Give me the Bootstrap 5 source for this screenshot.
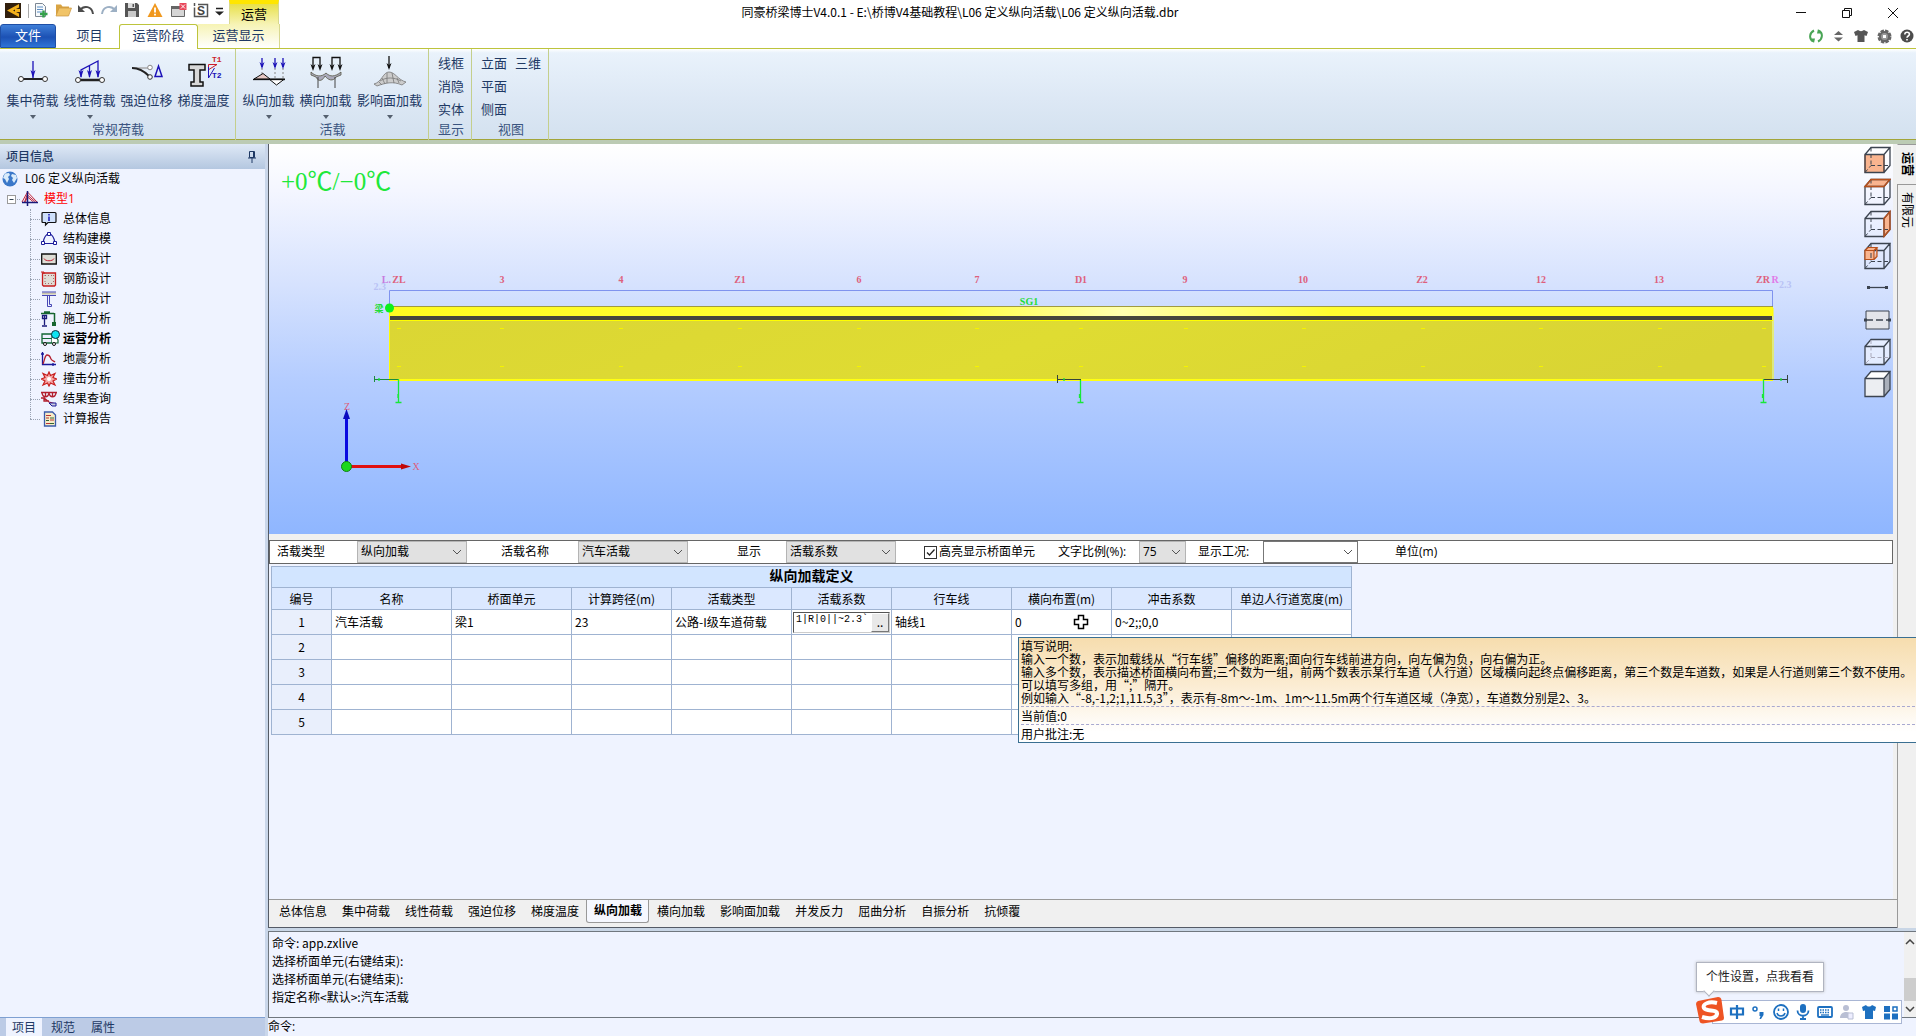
<!DOCTYPE html>
<html lang="zh-CN">
<head>
<meta charset="utf-8">
<meta name="viewport" content="width=device-width, initial-scale=1">
<title>同豪桥梁博士V4.0.1</title>
<link href="https://cdn.jsdelivr.net/npm/bootstrap@5.3.0/dist/css/bootstrap.min.css" rel="stylesheet">
<style>
:root{--ink:#1e3964;--pane:#eff3ff;--rule:#9fb3d1}
body{font:12px/18px "Noto Sans CJK SC",sans-serif;color:#000;background:#fff;overflow:hidden}
button,select,input{font:inherit;color:inherit;border-radius:0}
button{border:0;background:none;padding:0}
svg{display:block;flex:none}
.latin{font-family:"Open Sans","Noto Sans CJK SC",sans-serif}
.cjk{font-family:"Noto Sans CJK SC",sans-serif}
/* title bar and tabs */
.titlebar{height:24px}
.titlebar .cap{line-height:24px}
.quick{padding-left:5px;width:229px}
.ctx-title{width:50px;font-size:13px;border:1px solid #d8d890;border-width:0 1px;border-top:4px solid #ffe600;background:linear-gradient(#e8e04a,#f6f3b4);line-height:20px}
.winbtns{width:275px}
.winbtns button{width:46px;height:24px;display:flex;align-items:center;justify-content:center}
.tabrow{height:25px;border-bottom:1px solid #bdc43c;font-size:13px;color:var(--ink)}
.tabrow a{color:var(--ink);text-decoration:none;line-height:23px;text-align:center;height:24px}
.tabrow .t-file{width:56px;color:#fff;background:linear-gradient(#3f7fd8,#1c51b4 55%,#2f74d6);border:1px solid #1f4fa5;border-radius:3px 3px 0 0;line-height:21px}
.tabrow .t-proj{width:63px;padding-left:4px}
.tabrow .t-on{width:79px;height:25px;background:#fff;border:1px solid #bdc43c;border-bottom:0;border-radius:3px 3px 0 0;line-height:21px}
.tabrow .t-ctx{width:82px;background:linear-gradient(#f6f3b4,#fff);border-right:1px solid #d8d890}
.aux{gap:8px;padding-right:2px}
/* ribbon */
.ribbon{height:95px;background:linear-gradient(#fff 0,#e9f2fb 4px,#dde8f5 50px,#d3e1ef);border-bottom:4px solid #bccbb4;box-shadow:inset 0 -1px #a2a53a;color:var(--ink);font-size:13px}
.rgroup{border-right:1px solid #c4cf8c;height:91px;padding-top:3px}
.rgroup.wide{padding-left:4px;padding-right:3px}
.rgroup.slim{padding-left:9px;padding-right:7px}
.rbody{height:69px}
.rbig{width:57px;display:flex;flex-direction:column;align-items:center;padding-top:4px;white-space:nowrap}
.rbig.w5{width:71px}
.rbig svg{margin-bottom:3px}
.rbig .caret{width:0;height:0;border:3px solid transparent;border-top:4px solid #55606f;border-bottom:0;margin-top:6px}
.rsmall button{display:block;line-height:23px}
.rname{text-align:center;line-height:17px;color:#3a5480}
/* project tree */
.side{width:268px;background:#c9d6ea}
.side-in{width:265px;background:var(--pane)}
.side-head{height:25px;padding:0 8px 0 6px;background:linear-gradient(#dfe9f6,#b4c7e0);color:var(--ink);font-weight:500}
.tree a{color:#000;text-decoration:none;height:20px;display:flex;align-items:center}
.tree .root{padding-left:2px;gap:7px}
.tree .mdl{padding-left:7px;color:red}
.tree .leaf{height:20px;margin-left:30px;display:flex;align-items:center;position:relative}
.tree .leaf::before{content:"";width:10px;border-top:1px dotted #9aa3b4;margin-right:1px}
.tree .leaf::after{content:"";position:absolute;left:0;top:0;height:20px;border-left:1px dotted #9aa3b4}
.tree .leaf:last-child::after{height:10px}
.tree .leaf a{gap:6px}
.tree .leaf a.fw-bold{gap:3px}
.side-tabs{height:19px;background:#bccbe6;border-top:1px solid #7fa0d2;padding-left:6px;gap:2px;color:var(--ink)}
.side-tabs button{width:38px;line-height:20px}
.side-tabs .on{background:var(--pane);width:36px}
/* workspace */
.work{background:#f0f0f0;border-left:1px solid #555b66}
.scene{height:390px;background:linear-gradient(#fff,#f4f6ff 12%,#d6e2fe 36%,#b5cdff 60%,#8fb6ff);position:relative;overflow:hidden}
.scene>svg{width:100%;height:390px}
.viewtools{position:absolute;right:2px;top:0}
.viewtools button{width:28px;height:32px;display:flex;align-items:center;justify-content:center}
.ser{font-family:"Liberation Serif","Noto Sans CJK SC",serif}
.params{height:24px;margin-top:6px;background:#fff;border:1px solid #666;padding-left:7px;display:grid;align-items:center;grid-template-columns:80px 144px 77px 159px 49px 138px 134px 81px 59px 65px 132px auto}
.params select{appearance:none;height:22px;width:110px;padding:0 3px;border:1px solid #b4b4b4;line-height:18px;outline:0;
background:#e1e1e1 url("data:image/svg+xml,%3Csvg xmlns='http://www.w3.org/2000/svg' width='10' height='6'%3E%3Cpath d='M1 1l4 4 4-4' fill='none' stroke='%23555'/%3E%3C/svg%3E") no-repeat right 4px center}
.params .s-num{width:47px}
.params .s-blank{width:95px;background-color:#fff;border-color:#777}
.params input{appearance:none;width:13px;height:13px;border:1px solid #333;margin:0 2px 0 0;background:#fff url("data:image/svg+xml,%3Csvg xmlns='http://www.w3.org/2000/svg' width='11' height='11'%3E%3Cpath d='M2 5.500l2.500 2.500L9.500 2.500' fill='none' stroke='%23222' stroke-width='1.300'/%3E%3C/svg%3E") center}
.defs{background:var(--pane);padding:2px 0 0 2px}
.deftable{width:1080px;table-layout:fixed;border-collapse:collapse;margin:0;border:1px solid var(--rule)}
.deftable td,.deftable th{border:1px solid var(--rule);padding:0 3px;height:25px;line-height:18px;background:#fff;color:#000;white-space:nowrap;vertical-align:middle}
.deftable thead th{background:#dbe8ff;text-align:center;font-weight:400;height:22px}
.deftable thead .cap-row{background:#d2e5ff;font-weight:700;font-size:14px;line-height:16px;height:21px;vertical-align:top}
.deftable tbody th{background:#e9effc;text-align:center;font-weight:400}
.deftable td.editing{padding:0 1px}
.cell-edit{height:21px;border:1px solid #555;border-right-color:#ccc;border-bottom-color:#ccc;background:#fff}
.cell-edit input{border:0;outline:0;padding:0 2px;width:77px;height:14px;font:10px/14px "Liberation Mono",monospace}
.cell-edit button{width:19px;background:#e8e8e8;border:1px solid #fff;border-right-color:#777;border-bottom-color:#777;line-height:14px}
.hot{position:relative}
.cross{position:absolute;left:61px;top:4px}
.hint{position:absolute;left:6px;top:27px;z-index:5;min-width:900px;border:1px solid #3a6f92;background:linear-gradient(#f6ddae,#fbecd2 45%,#fff 90%);padding:1px 2px 0;line-height:13px}
.hint p{margin:0;line-height:18px;border-top:1px dashed #a9a9d0;height:18px}
.hint div{padding-bottom:2px}
.sheets{height:29px;border-top:1px solid #999;border-bottom:1px solid #555b66;padding-left:2px}
.sheets button{padding:0 7px 0 8px;height:23px;line-height:22px}
.sheets .on{background:#f6f8ff;border:1px solid #999;border-top:0;font-weight:700;padding:0 6px 0 7px;border-radius:0 0 3px 3px}
.vtabs{width:19px}
.vtabs button{writing-mode:vertical-rl;text-orientation:sideways;width:20px;border-left:1px solid #999;border-top:1px solid #999;text-align:left;padding-top:7px;line-height:18px}
.vtabs .on{height:40px;border-left-color:#f0f0f0;font-weight:700}
/* command line */
.cmd{background:#c9d6e6;padding-top:3px}
.log{height:87px;background:var(--pane);border:1px solid #70777f;border-right:0}
.log .lines{padding:2px 0 0 3px}
.sbar{width:12px;background:#f0f0f0;padding:7px 0 6px}
.sbar i{width:12px;height:23px;background:#cdcdcd;display:block;margin:33px 0 5px}
.prompt{height:18px;background:var(--pane)}
.prompt label{line-height:17px}
.prompt input{border:0;background:none;outline:0;height:16px;padding:0 4px}
/* input method bar */
.ime{position:absolute;right:14px;bottom:12px;z-index:6}
.ime-tip{width:128px;height:30px;border:1px solid #b0b4c0;background:#fff;line-height:28px;padding-left:9px;margin-bottom:8px;box-shadow:0 0 3px #bbb;position:relative;color:#222}
.ime-tip::after{content:"";position:absolute;left:8px;top:24px;width:8px;height:8px;background:#fff;border:1px solid #b0b4c0;border-width:0 1px 1px 0;transform:rotate(45deg)}
.ime-bar{height:24px;width:206px;padding-left:33px;gap:6px;position:relative}
.ime-bar::before{content:"";position:absolute;left:16px;right:0;top:0;bottom:0;background:#fff;border:1px solid #a9b6d4}
.ime-bar button{position:relative}
.ime-bar .logo{position:absolute;left:0;top:-4px}
</style>
</head>
<body class="vh-100 d-flex flex-column latin">
<svg width="0" height="0" class="position-absolute">
<defs>
<symbol id="cube" viewBox="0 0 28 30"><path d="M2 9.500h19v18H2zM2 9.500l6-7h19l-6 7M27 2.500v18l-6 7" fill="none" stroke="#3c4450" stroke-width="1.300"/><path d="M8 2.500v18M8 20.500h19M2 27.500l6-7" fill="none" stroke="#3c4450" stroke-dasharray="4 2.500"/></symbol>
</defs>
</svg>

<header>
<div class="titlebar d-flex">
  <div class="quick d-flex align-items-start flex-shrink-0">
    <svg width="224" height="24" viewBox="5 0 224 24">
      <rect x="5" y="3" width="16" height="15" fill="#32200d"/><path d="M19 4L7 10.500 19 17v-3.500L13 10.500 19 7.500z" fill="#f4b21c"/><path d="M15 9h5v3h-5z" fill="#f4b21c"/>
      <path d="M28.500 4v14" stroke="#aaa"/>
      <path d="M35.500 3.500h7l3 3v10h-10z" fill="#f7fafc" stroke="#7c8794"/><path d="M37 7h6M37 9.500h6M37 12h5" stroke="#5d8ec4"/><path d="M43.500 10.500v7M40 14h7.500" stroke="#34a04a" stroke-width="2.500"/>
      <path d="M56 15V4.500h5l1.500 2H69V9" fill="#d9a442"/><path d="M56 16l3-8h12.500l-3 8z" fill="#f1c468" stroke="#c99540" stroke-width=".7"/>
      <path d="M80 10c4-5 12-4 13 4" fill="none" stroke="#4c4c4c" stroke-width="2"/><path d="M78 5v7h7z" fill="#4c4c4c"/>
      <path d="M115 10c-4-5-12-4-13 4" fill="none" stroke="#9db0c4" stroke-width="2"/><path d="M117 5v7h-7z" fill="#9db0c4"/>
      <path d="M125 3h12l2 2v12h-14z" fill="#555"/><path d="M128 3h7v5h-7z" fill="#ddd"/><path d="M132.500 4h1.500v3h-1.500z" fill="#555"/><path d="M128 11h8v6h-8z" fill="#c9c9c9"/>
      <path d="M155 3l7.500 14h-15z" fill="#f0981e"/><path d="M155 7.500v5M155 13.700v1.800" stroke="#fff" stroke-width="1.800"/>
      <path d="M171.500 6.500h13v10h-13z" fill="#d5d5d5" stroke="#666"/><path d="M171 6h14v3h-14z" fill="#666"/><path d="M179.500 3h7v7h-7z" fill="#e8465a"/><path d="M181 4.500l4 4m0-4l-4 4" stroke="#fff"/>
      <path d="M198 4.500h9.500v12H194.500v-9" fill="none" stroke="#555" stroke-width="1.500"/><text x="197" y="15" font-size="12" font-weight="700" fill="#444" font-family="Liberation Sans">S</text><path d="M194.500 3v3" stroke="#555" stroke-width="1.500"/>
      <path d="M216 8.500h7" stroke="#222" stroke-width="1.500"/><path d="M215 11.500h9l-4.500 4z" fill="#222"/>
    </svg>
  </div>
  <div class="ctx-title text-center flex-shrink-0">运营</div>
  <div class="flex-grow-1 text-center cap cjk">同豪桥梁博士V4.0.1 - E:\桥博V4基础教程\L06 定义纵向活载\L06 定义纵向活载.dbr</div>
  <div class="winbtns d-flex justify-content-end">
    <button aria-label="最小化"><svg width="12" height="12"><path d="M1 6.500h10" stroke="#111"/></svg></button>
    <button aria-label="还原"><svg width="12" height="12"><path d="M1.500 4.500h7v7h-7zM3.500 4V2.500h7v7H9" fill="none" stroke="#111"/></svg></button>
    <button aria-label="关闭"><svg width="12" height="12"><path d="M1 2l10 10M11 2L1 12" stroke="#111"/></svg></button>
  </div>
</div>
<nav class="tabrow d-flex">
  <a href="#" class="t-file">文件</a><a href="#" class="t-proj">项目</a><a href="#" class="t-on">运营阶段</a><a href="#" class="t-ctx">运营显示</a>
  <div class="aux ms-auto d-flex align-items-center">
    <svg width="14" height="14"><path d="M5 1.500C0 4 0 10 4 12.500M9 12.500C14 10 14 4 10 1.500" fill="none" stroke="#4aa556" stroke-width="2"/><path d="M1 9.500l5 0-1 4.500zM13 4.500l-5 0L9 0z" fill="#4aa556"/></svg>
    <svg width="14" height="14"><path d="M3 6h9L7.500 2zM3 8.500h9l-4.500 4z" fill="#666"/></svg>
    <svg width="16" height="14"><path d="M1 3l4-2c1.500 1.500 4.500 1.500 6 0l4 2-1.500 4-2-.7V13h-7V6.300l-2 .7z" fill="#555"/></svg>
    <svg width="15" height="15"><circle cx="7.500" cy="7.500" r="5.500" fill="#666" stroke="#666" stroke-width="3" stroke-dasharray="3.200 1.100"/><circle cx="7.500" cy="7.500" r="3.500" fill="#999"/><rect x="6" y="6" width="3" height="3" fill="#fff"/></svg>
    <svg width="14" height="14"><circle cx="7" cy="7" r="6.500" fill="#4c4c4c"/><path d="M4.800 5.500c0-3 4.600-2.800 4.600-.2C9.400 7 7 7 7 8.800M7 10v1.600" stroke="#fff" stroke-width="1.600" fill="none"/></svg>
  </div>
</nav>
<div class="ribbon d-flex">
  <div class="rgroup wide">
    <div class="rbody d-flex">
      <button class="rbig"><svg width="44" height="32" viewBox="0 0 44 32"><path d="M9 23h25" stroke="#222" stroke-width="2"/><circle cx="10" cy="23" r="2.500" fill="#fff" stroke="#333"/><circle cx="34" cy="23" r="2.500" fill="#fff" stroke="#333"/><path d="M22 5v17" stroke="#1c12b8" stroke-width="1.300"/><path d="M19.500 14L22 22l2.500-8L22 16z" fill="#1c12b8"/></svg>集中荷载<span class="caret"></span></button>
      <button class="rbig"><svg width="44" height="32" viewBox="0 0 44 32"><path d="M10 24h24" stroke="#222" stroke-width="2.500"/><circle cx="10" cy="24" r="2.500" fill="#fff" stroke="#333"/><circle cx="34" cy="24" r="2.500" fill="#fff" stroke="#333"/><path d="M13 21v-7L30 5v16M21.500 21V9.500" stroke="#1c12b8" stroke-width="1.300" fill="none"/><path d="M10.500 14l2.500 8 2.500-8-2.500 2zM19 14l2.500 8 2.500-8-2.500 2zM27.500 14l2.500 8 2.500-8-2.500 2z" fill="#1c12b8"/></svg>线性荷载<span class="caret"></span></button>
      <button class="rbig"><svg width="44" height="32" viewBox="0 0 44 32"><path d="M7 12h17" stroke="#aaa" stroke-width="1.500"/><path d="M7 12c7 0 13 4 17 8" stroke="#222" stroke-width="1.800" fill="none"/><circle cx="25" cy="11.500" r="2.300" fill="#fff" stroke="#888"/><circle cx="25" cy="21" r="2.300" fill="#fff" stroke="#333"/><path d="M30 20.500h7L33.500 10z" fill="none" stroke="#1c12b8" stroke-width="1.500"/></svg>强迫位移</button>
      <button class="rbig"><svg width="44" height="32" viewBox="0 0 44 32"><path d="M7 8.500h16v5.500h-5v12h3v4h-12v-4h3V14H7z" fill="#d8d8d8" stroke="#111" stroke-width="1.500"/><path d="M26.500 20V8.500H35L26 14" fill="none" stroke="#cc1e2c"/><path d="M26.500 11v11l6-10" fill="none" stroke="#1c12b8"/><text x="30" y="6" font-size="8" font-weight="700" fill="#cc1e2c" font-family="Liberation Mono">T1</text><text x="30" y="22" font-size="8" font-weight="700" fill="#1c12b8" font-family="Liberation Mono">T2</text></svg>梯度温度</button>
    </div>
    <div class="rname">常规荷载</div>
  </div>
  <div class="rgroup wide">
    <div class="rbody d-flex">
      <button class="rbig"><svg width="44" height="32" viewBox="0 0 44 32"><path d="M15 12v11M28 12v11M36 12v11" stroke="#888" stroke-dasharray="2 2"/><path d="M7 23l9-5.500 7 5.500z" fill="#e8c9c4" stroke="#111"/><path d="M22 23l7.500 6 8-6z" fill="#fff" stroke="#111"/><path d="M6 23.500h32" stroke="#111" stroke-width="1.300"/><path d="M15 2v9M28 2v9M36 2v9" stroke="#1c12b8" stroke-width="1.300"/><path d="M12.500 6l2.500 7 2.500-7L15 8zM25.500 6l2.500 7 2.500-7L28 8zM33.500 6l2.500 7 2.500-7L36 8z" fill="#1c12b8"/></svg>纵向加载<span class="caret"></span></button>
      <button class="rbig"><svg width="44" height="32" viewBox="0 0 44 32"><path d="M7 16v3l5 2c3 6 7 3 9-1 3 4 8 6 11 1l5-2v-3c-6 5-11 5-15 1-4 4-10 4-15-1z" fill="#aab" stroke="#554" stroke-width=".8"/><path d="M14 21v12M31 21v12" stroke="#444"/><path d="M9 12V1.500h7V12M28 12V1.500h8V12" fill="none" stroke="#111" stroke-width="1.300"/><path d="M6.500 8L9 15l2.500-7L9 10zM13.500 8l2.500 7 2.500-7-2.500 2zM25.500 8l2.500 7 2.500-7-2.500 2zM33.500 8l2.500 7 2.500-7-2.500 2z" fill="#111"/></svg>横向加载<span class="caret"></span></button>
      <button class="rbig w5"><svg width="44" height="32" viewBox="0 0 44 32"><path d="M6 28c8-2 9-12 15-12s9 8 17 10l-4 3c-9-4-17-2-25 1z" fill="#ccc" stroke="#777" stroke-width=".8"/><path d="M14 22l3 6M19 17v10M24 17l2 10M11 26l3 3M29 22l2 5M12 25c6-4 14-4 21 0" stroke="#777" stroke-width=".8" fill="none"/><path d="M21 0v12" stroke="#111" stroke-width="1.300"/><path d="M18.500 7L21 14l2.500-7L21 9z" fill="#111"/></svg>影响面加载<span class="caret"></span></button>
    </div>
    <div class="rname">活载</div>
  </div>
  <div class="rgroup slim">
    <div class="rbody rsmall"><button>线框</button><button>消隐</button><button>实体</button></div>
    <div class="rname">显示</div>
  </div>
  <div class="rgroup slim">
    <div class="rbody rsmall d-flex gap-2"><div><button>立面</button><button>平面</button><button>侧面</button></div><div><button>三维</button></div></div>
    <div class="rname">视图</div>
  </div>
</div>
</header>

<main class="d-flex flex-grow-1 position-relative" style="min-height:0">
<aside class="side flex-shrink-0">
 <div class="side-in h-100 d-flex flex-column">
  <div class="side-head d-flex align-items-center justify-content-between">项目信息
    <svg width="10" height="12"><path d="M2.500.500h5v6h-5zM1 7h8M5 7v5M6.500 1v6" fill="none" stroke="#1e3964"/></svg></div>
  <div class="tree flex-grow-1">
    <a href="#" class="root"><svg width="16" height="16"><circle cx="8" cy="8" r="7.500" fill="#3b78c9"/><path d="M3 2.500l4-.5 1 2-2 2 1 2-2 4-2-4-2-1zM10 3l4 1 1 3-3 5-2-3 1-2-2-2z" fill="#d9ebfa"/></svg>L06 定义纵向活载</a>
    <a href="#" class="mdl"><svg width="37" height="20"><rect x=".5" y="6.500" width="8" height="8" fill="#fff" stroke="#9a9a9a"/><path d="M2.500 10.500h4" stroke="#345"/><path d="M10 10.500h4" stroke="#9aa3b4" stroke-dasharray="1 1"/><path d="M15 13L20.500 3 30 13M18 13l2.500-5 6 5M20.500 5l-3 8M20.500 6l8 7" fill="none" stroke="#c22538"/><path d="M20.500 2v15M15 13.500h16" stroke="#1a1a7a" stroke-width="1.500"/></svg>模型1</a>
    <div>
      <div class="leaf"><a href="#"><svg width="16" height="16"><path d="M1 2.500q0-1 1-1h12q1 0 1 1v8q0 1-1 1H7L4.500 14v-2.500H2q-1 0-1-1z" fill="#cfe0fb" stroke="#111" stroke-width="1.200"/><path d="M8 3v1.500M8 5.500V10" stroke="#22b" stroke-width="1.600"/></svg>总体信息</a></div>
      <div class="leaf"><a href="#"><svg width="16" height="16"><path d="M2 12C3 6 5 3 8 3s5 3 6 9M2 12.500h12" fill="none" stroke="#1a1a9a" stroke-width="1.200"/><path d="M6.500 1.500h3v3h-3zM.500 10.500h3v3h-3zM12.500 10.500h3v3h-3z" fill="#fff" stroke="#1a1a9a"/></svg>结构建模</a></div>
      <div class="leaf"><a href="#"><svg width="16" height="16"><path d="M.700 3h14.600v10H.700z" fill="#deddd6" stroke="#111" stroke-width="1.300"/><path d="M3 7.500c1 3 9 3 10 0" fill="none" stroke="#c22538"/></svg>钢束设计</a></div>
      <div class="leaf"><a href="#"><svg width="16" height="16"><path d="M1.500 2h13v12l-1 1h-11l-1-1z" fill="#deddd6" stroke="#c81e1e" stroke-width="1.300"/><path d="M4 4.500h9M4 12.500h9M4 4v8M12.500 4v9" stroke="#a66" stroke-dasharray="1 2"/><path d="M0 1h3v2" fill="none" stroke="#c81e1e"/></svg>钢筋设计</a></div>
      <div class="leaf"><a href="#"><svg width="16" height="16"><path d="M1 2.500h14" stroke="#c9c5a8" stroke-width="2"/><path d="M1 1h14M1 4.500h14M6.500 5v10.500h4v-2h-2V5" fill="none" stroke="#4747b5"/></svg>加劲设计</a></div>
      <div class="leaf"><a href="#"><svg width="16" height="16"><path d="M0 2.500h13M3 1h6M13.500 2v10" stroke="#16652f" stroke-width="1.500"/><path d="M11 11h4v4h-4z" fill="#16652f"/><path d="M3.500 4v10M1 15h5M1.500 4.500h4v3h-4z" fill="#fff" stroke="#1a1a7a" stroke-width="1.300"/></svg>施工分析</a></div>
      <div class="leaf"><a href="#" class="fw-bold"><svg width="19" height="18"><path d="M1 4h10v9H1z" fill="#eef" stroke="#163" stroke-width="1.300"/><path d="M11 7h4l2 3v3h-6M1 8.500h10" fill="#fff" stroke="#163" stroke-width="1.200"/><circle cx="4" cy="14" r="1.500" fill="#fff" stroke="#111"/><circle cx="13" cy="14" r="1.500" fill="#fff" stroke="#111"/><circle cx="14.500" cy="4.500" r="4" fill="#0fe5f2" stroke="#134"/></svg>运营分析</a></div>
      <div class="leaf"><a href="#"><svg width="16" height="16"><path d="M1.500 1v12.500H15M0 3h3M12 12v3" stroke="#1a1a9a" stroke-width="1.300" fill="none"/><path d="M2 13C4 8 4 4 6 4c3 0 3 2 4 4s3 2 4 3" fill="none" stroke="#b21e2e" stroke-width="1.300"/></svg>地震分析</a></div>
      <div class="leaf"><a href="#"><svg width="16" height="16"><path d="M8 1l1.500 3.500L14 2.500 12 6.500l3.500 1.500L12 10l2 4-4.500-2L8 15l-1.500-3L2 14l2-4L.500 8 4 6.500 2 2.500l4.500 2z" fill="#f5a9a9" stroke="#c81e1e" stroke-width="1.200"/><circle cx="8" cy="8" r="2" fill="#fff"/></svg>撞击分析</a></div>
      <div class="leaf"><a href="#"><svg width="16" height="16"><path d="M0 1.500h16M1 2c1 5 6 5 7 0 1 5 6 5 7 0M0 7h3l5 4 7 2M4.500 2v3M11.500 2v3M3 7v3h5" fill="none" stroke="#b21e2e" stroke-width="1.300"/><path d="M8 12h7v3H11z" fill="#ccd" stroke="#1a1a9a"/></svg>结果查询</a></div>
      <div class="leaf"><a href="#"><svg width="16" height="16"><path d="M3.500 1h8l3 3v11h-11z" fill="#f6ecc8" stroke="#3c5caa" stroke-width="1.300"/><path d="M5 4.500h5M5 7h3M9 9h4M5 12.500h4" stroke="#b33"/><path d="M9 7h4M5 9.500h3M9 12.500h4" stroke="#363"/></svg>计算报告</a></div>
    </div>
  </div>
  <div class="side-tabs d-flex"><button class="on">项目</button><button>规范</button><button>属性</button></div>
 </div>
</aside>

<section class="flex-grow-1 d-flex flex-column" style="min-width:0">
 <div class="work flex-grow-1 d-flex" style="min-height:0">
  <div class="flex-grow-1 d-flex flex-column" style="min-width:0">
   <div class="scene me-1">
    <svg viewBox="0 0 1624 390" preserveAspectRatio="none" fill="none">
      <defs><linearGradient id="deck"><stop offset="0" stop-color="#fffb20"/><stop offset=".4" stop-color="#fffe3a"/><stop offset=".53" stop-color="#ffffb0"/><stop offset=".68" stop-color="#fffd30"/><stop offset="1" stop-color="#fffb18"/></linearGradient>
      <linearGradient id="web" x2="1" y2=".1"><stop offset="0" stop-color="#dbd634"/><stop offset=".5" stop-color="#dfdc32"/><stop offset="1" stop-color="#d9d434"/></linearGradient></defs>
      <text x="12" y="46" font-size="25" fill="#20e83a" class="ser">+0℃/−0℃</text>
      <path d="M120.500 162V146.500H1503.500V162" stroke="#7f93ee"/>
      <path d="M120 162.500H1504" stroke="#a09a40"/>
      <rect x="120" y="163" width="1384" height="9" fill="url(#deck)"/>
      <rect x="120" y="172" width="1383" height="4" fill="#45453c"/>
      <rect x="121" y="177" width="1382" height="59" fill="url(#web)"/>
      <path d="M120.500 163V237M121 176.500H1504M1504 164V236" stroke="#ff0" /><path d="M120 236H1504" stroke="#ffff12" stroke-width="2"/>
      <path d="M128 184.500h4M231 184.500h4M350 184.500h4M469 184.500h4M588 184.500h4M706 184.500h4M810 184.500h4M915 184.500h4M1033 184.500h4M1152 184.500h4M1270 184.500h4M1389 184.500h4M1493 184.500h4M128 222.500h4M231 222.500h4M350 222.500h4M469 222.500h4M588 222.500h4M706 222.500h4M810 222.500h4M915 222.500h4M1033 222.500h4M1152 222.500h4M1270 222.500h4M1389 222.500h4M1493 222.500h4" stroke="#f5f300"/>
      <g font-size="10" fill="#de5f7c" text-anchor="middle" font-weight="700" class="ser">
        <text x="117" y="146" fill="#b9c2f5" text-anchor="end">2.3</text><text x="122" y="139" fill="#c77bdf" text-anchor="end">L.</text><text x="130" y="139">ZL</text>
        <text x="233" y="139">3</text><text x="352" y="139">4</text><text x="471" y="139">Z1</text><text x="590" y="139">6</text><text x="708" y="139">7</text><text x="812" y="139">D1</text><text x="916" y="139">9</text><text x="1034" y="139">10</text><text x="1153" y="139">Z2</text><text x="1272" y="139">12</text><text x="1390" y="139">13</text>
        <text x="1510" y="144" fill="#b9c2f5" text-anchor="start">2.3</text><text x="1494" y="139">ZR</text><text x="1506" y="139" fill="#e07be8">R</text>
        <text x="760" y="161" fill="#1fdc36">SG1</text><text x="110" y="168" font-size="9" fill="#1fdc36">梁</text>
        <text x="78" y="266" font-weight="400">Z</text><text x="147" y="326" font-weight="400">X</text>
      </g>
      <circle cx="120.500" cy="164" r="4.500" fill="#0cf01c"/>
      <path d="M105.500 232v6M105 235.500h25" stroke="#1c8b3c"/><path d="M129.500 235v23M126.500 258.500h6M110 234v3M129 250v4" stroke="#18e838" stroke-width="1.300"/>
      <path d="M788.500 231v8M788 235.500h24M1494 235.500h25M1518.500 231v8" stroke="#34443c"/>
      <path d="M811.500 236v22M808.500 258.500h6M810.500 250v4M795 234v3M1494.500 235v23M1491.500 258.500h6M1493.500 250v4M1512 234v3" stroke="#18e838" stroke-width="1.300"/>
      <path d="M77.500 322V272" stroke="#0a0ae0" stroke-width="3"/><path d="M74 275L77.500 265l3.500 10z" fill="#0a0ac0"/>
      <path d="M78 322.500H134" stroke="#e01010" stroke-width="3"/><path d="M132 319.500l10 3-10 3z" fill="#c00808"/>
      <circle cx="77.500" cy="322.500" r="5" fill="#1bd81b" stroke="#128012"/>
    </svg>
    <div class="viewtools">
      <button aria-label="前面"><svg width="28" height="30"><path d="M2 9.500h19v18H2z" fill="#f9b48f" stroke="#b8501c"/><use href="#cube"/></svg></button>
      <button aria-label="顶面"><svg width="28" height="30"><path d="M2 9.500l6-7h19l-6 7z" fill="#f9b48f"/><use href="#cube"/><path d="M2 9.500l6-7h19l-6 7z" fill="none" stroke="#b8501c" stroke-width="1.300"/></svg></button>
      <button aria-label="侧面"><svg width="28" height="30"><path d="M21 9.500l6-7v18l-6 7z" fill="#f9b48f"/><use href="#cube"/><path d="M21 9.500l6-7v18l-6 7z" fill="none" stroke="#b8501c" stroke-width="1.300"/></svg></button>
      <button aria-label="局部"><svg width="28" height="30"><use href="#cube"/><path d="M2 9.500h9v9H2zM2 9.500l3-3h9l-3 3M14 6.500v9l-3 3" fill="#f9b48f" stroke="#b8501c" stroke-width="1.200"/><path d="M8 12v5" stroke="#3c4450"/></svg></button>
      <button aria-label="单元"><svg width="28" height="30"><path d="M5 14.500h19" stroke="#3c4450" stroke-width="1.300"/><path d="M4 13h3v3H4zM22 13h3v3h-3z" fill="#3c4450"/></svg></button>
      <button aria-label="截面"><svg width="28" height="30"><path d="M3 6h23v18H3z" fill="#e3e5ea" stroke="#3c4450"/><path d="M3 15h23" stroke="#3c4450" stroke-width="1.300" stroke-dasharray="7 3"/><path d="M1 13.500h3v3H1zM25 13.500h3v3h-3z" fill="#3c4450"/></svg></button>
      <button aria-label="透明"><svg width="28" height="30"><path d="M2 9.500l6-7h19v18l-6 7H2z" fill="#eef2ff" fill-opacity=".8"/><path d="M2 9.500h19v18H2zM2 9.500l6-7h19l-6 7M27 2.500v18l-6 7" fill="none" stroke="#3c4450" stroke-width="1.300"/><path d="M8 3v17M8 20.500h18M3 26l5-5" stroke="#aab" stroke-dasharray="4 2.500"/></svg></button>
      <button aria-label="实体"><svg width="28" height="30"><path d="M2 9.500l6-7h19l-6 7z" fill="#fff"/><path d="M21 9.500l6-7v18l-6 7z" fill="#aab0bb"/><path d="M2 9.500h19v18H2z" fill="#eceef2"/><path d="M2 9.500h19v18H2zM2 9.500l6-7h19l-6 7M27 2.500v18l-6 7" fill="none" stroke="#3c4450" stroke-width="1.300"/></svg></button>
    </div>
   </div>
   <form class="params me-1">
     <label for="p1">活载类型</label><select id="p1"><option>纵向加载</option></select>
     <label for="p2">活载名称</label><select id="p2"><option>汽车活载</option></select>
     <label for="p3">显示</label><select id="p3"><option>活载系数</option></select>
     <label class="d-flex align-items-center"><input type="checkbox" checked>高亮显示桥面单元</label>
     <label for="p4">文字比例(%):</label><select id="p4" class="s-num"><option>75</option></select>
     <label for="p5">显示工况:</label><select id="p5" class="s-blank"><option></option></select>
     <span>单位(m)</span>
   </form>
   <div class="defs flex-grow-1 me-1 cjk" style="min-height:0">
    <table class="deftable">
     <colgroup><col style="width:60px"><col style="width:120px"><col style="width:120px"><col style="width:100px"><col style="width:120px"><col style="width:100px"><col style="width:120px"><col style="width:100px"><col style="width:120px"><col style="width:120px"></colgroup>
     <thead>
      <tr><th colspan="10" class="cap-row">纵向加载定义</th></tr>
      <tr><th>编号</th><th>名称</th><th>桥面单元</th><th>计算跨径(m)</th><th>活载类型</th><th>活载系数</th><th>行车线</th><th>横向布置(m)</th><th>冲击系数</th><th>单边人行道宽度(m)</th></tr>
     </thead>
     <tbody>
      <tr><th>1</th><td>汽车活载</td><td>梁1</td><td>23</td><td>公路-I级车道荷载</td>
       <td class="editing"><div class="cell-edit d-flex"><input aria-label="活载系数" value="1|R|0||~2.3`"><button>..</button></div></td>
       <td>轴线1</td>
       <td class="hot">0<svg class="cross" width="16" height="16"><path d="M5.500 1.500h5v4h4v5h-4v4h-5v-4h-4v-5h4z" fill="#fff" stroke="#000" stroke-width="1.500"/></svg>
        <div class="hint"><div>填写说明:<br>输入一个数，表示加载线从“行车线”偏移的距离;面向行车线前进方向，向左偏为负，向右偏为正。<br>输入多个数，表示描述桥面横向布置;三个数为一组，前两个数表示某行车道（人行道）区域横向起终点偏移距离，第三个数是车道数，如果是人行道则第三个数不使用。<br>可以填写多组，用“;”隔开。<br>例如输入“-8,-1,2;1,11.5,3”，表示有-8m～-1m、1m～11.5m两个行车道区域（净宽），车道数分别是2、3。</div><p>当前值:0</p><p>用户批注:无</p></div></td>
       <td>0~2;;0,0</td><td></td></tr>
      <tr><th>2</th><td></td><td></td><td></td><td></td><td></td><td></td><td></td><td></td><td></td></tr>
      <tr><th>3</th><td></td><td></td><td></td><td></td><td></td><td></td><td></td><td></td><td></td></tr>
      <tr><th>4</th><td></td><td></td><td></td><td></td><td></td><td></td><td></td><td></td><td></td></tr>
      <tr><th>5</th><td></td><td></td><td></td><td></td><td></td><td></td><td></td><td></td><td></td></tr>
     </tbody>
    </table>
   </div>
   <div class="sheets d-flex">
    <button>总体信息</button><button>集中荷载</button><button>线性荷载</button><button>强迫位移</button><button>梯度温度</button><button class="on">纵向加载</button><button>横向加载</button><button>影响面加载</button><button>并发反力</button><button>屈曲分析</button><button>自振分析</button><button>抗倾覆</button>
   </div>
  </div>
  <div class="vtabs d-flex flex-column flex-shrink-0 cjk"><button class="on">运营</button><button class="flex-grow-1">有限元</button></div>
 </div>
 <div class="cmd flex-shrink-0">
  <div class="log d-flex cjk">
   <div class="lines flex-grow-1">命令: app.zxlive<br>选择桥面单元(右键结束):<br>选择桥面单元(右键结束):<br>指定名称&lt;默认&gt;:汽车活载</div>
   <div class="sbar"><svg width="12" height="6"><path d="M2 5l4-4 4 4" fill="none" stroke="#444" stroke-width="1.500"/></svg><i></i><svg width="12" height="6"><path d="M2 1l4 4 4-4" fill="none" stroke="#444" stroke-width="1.500"/></svg></div>
  </div>
  <div class="prompt d-flex"><label for="cl">命令:</label><input id="cl" class="flex-grow-1"></div>
 </div>
</section>

<div class="ime">
  <div class="ime-tip">个性设置，点我看看</div>
  <div class="ime-bar d-flex align-items-center">
    <svg class="logo" width="28" height="28" viewBox="0 0 28 28"><path d="M2 5L22 1q3 0 3.500 3L28 22q0 2-2 2.500L7 27.500q-3 0-3.500-2.500L0 8q0-2 2-3z" fill="#ee5424"/><path d="M21 7C13 5 6 8 8 12s14 1 13 6-9 5-15 3" fill="none" stroke="#fff" stroke-width="4"/></svg>
    <button aria-label="中文"><svg width="16" height="16"><path d="M2 4.500h12v6H2zM8 1v14" fill="none" stroke="#1d70c0" stroke-width="2.200"/></svg></button>
    <button aria-label="标点"><svg width="16" height="16"><circle cx="4" cy="5" r="2" fill="none" stroke="#1d70c0" stroke-width="1.500"/><path d="M8.500 8h4v3l-2.500 4H8.500l1-3h-1z" fill="#1d70c0"/></svg></button>
    <button aria-label="表情"><svg width="16" height="16"><circle cx="8" cy="8" r="7" fill="none" stroke="#1d70c0" stroke-width="1.800"/><path d="M4 9c1 4 7 4 8 0M5.500 4.500V7M10.500 4.500V7" fill="none" stroke="#1d70c0" stroke-width="1.500"/></svg></button>
    <button aria-label="语音"><svg width="16" height="16"><rect x="5" y="0" width="6" height="9" rx="3" fill="#1d70c0"/><path d="M2.500 6.500c0 7 11 7 11 0M8 12v3M5 15h6" fill="none" stroke="#1d70c0" stroke-width="1.800"/></svg></button>
    <button aria-label="键盘"><svg width="16" height="16"><rect x="1" y="3" width="14" height="10" rx="1" fill="#fff" stroke="#1d70c0" stroke-width="1.800"/><path d="M3 6h10M3 8.500h10" stroke="#1d70c0" stroke-width="1.500" stroke-dasharray="1.500 1"/><path d="M4 11h8" stroke="#1d70c0" stroke-width="1.300"/></svg></button>
    <button aria-label="用户"><svg width="16" height="16"><circle cx="7" cy="4" r="3" fill="#b9bfd4"/><path d="M1 14c0-8 12-8 12 0z" fill="#b9bfd4"/><path d="M9 9h5v6H9z" fill="#eef" stroke="#b9bfd4"/></svg></button>
    <button aria-label="皮肤"><svg width="16" height="16"><path d="M1 3l4-2c1.500 2 4.500 2 6 0l4 2-1 4-2-.5V15H4V6.500L2 7z" fill="#1d70c0"/></svg></button>
    <button aria-label="工具"><svg width="16" height="16"><path d="M1 2h6v6H1zM1 9.500h6v6H1zM9 9.500h6v6H9z" fill="#1d70c0"/><path d="M10 3h4v4h-4z" fill="#fff" stroke="#1d70c0" stroke-width="1.500"/></svg></button>
  </div>
</div>
</main>
<script src="https://cdn.jsdelivr.net/npm/bootstrap@5.3.0/dist/js/bootstrap.bundle.min.js"></script>
</body>
</html>
